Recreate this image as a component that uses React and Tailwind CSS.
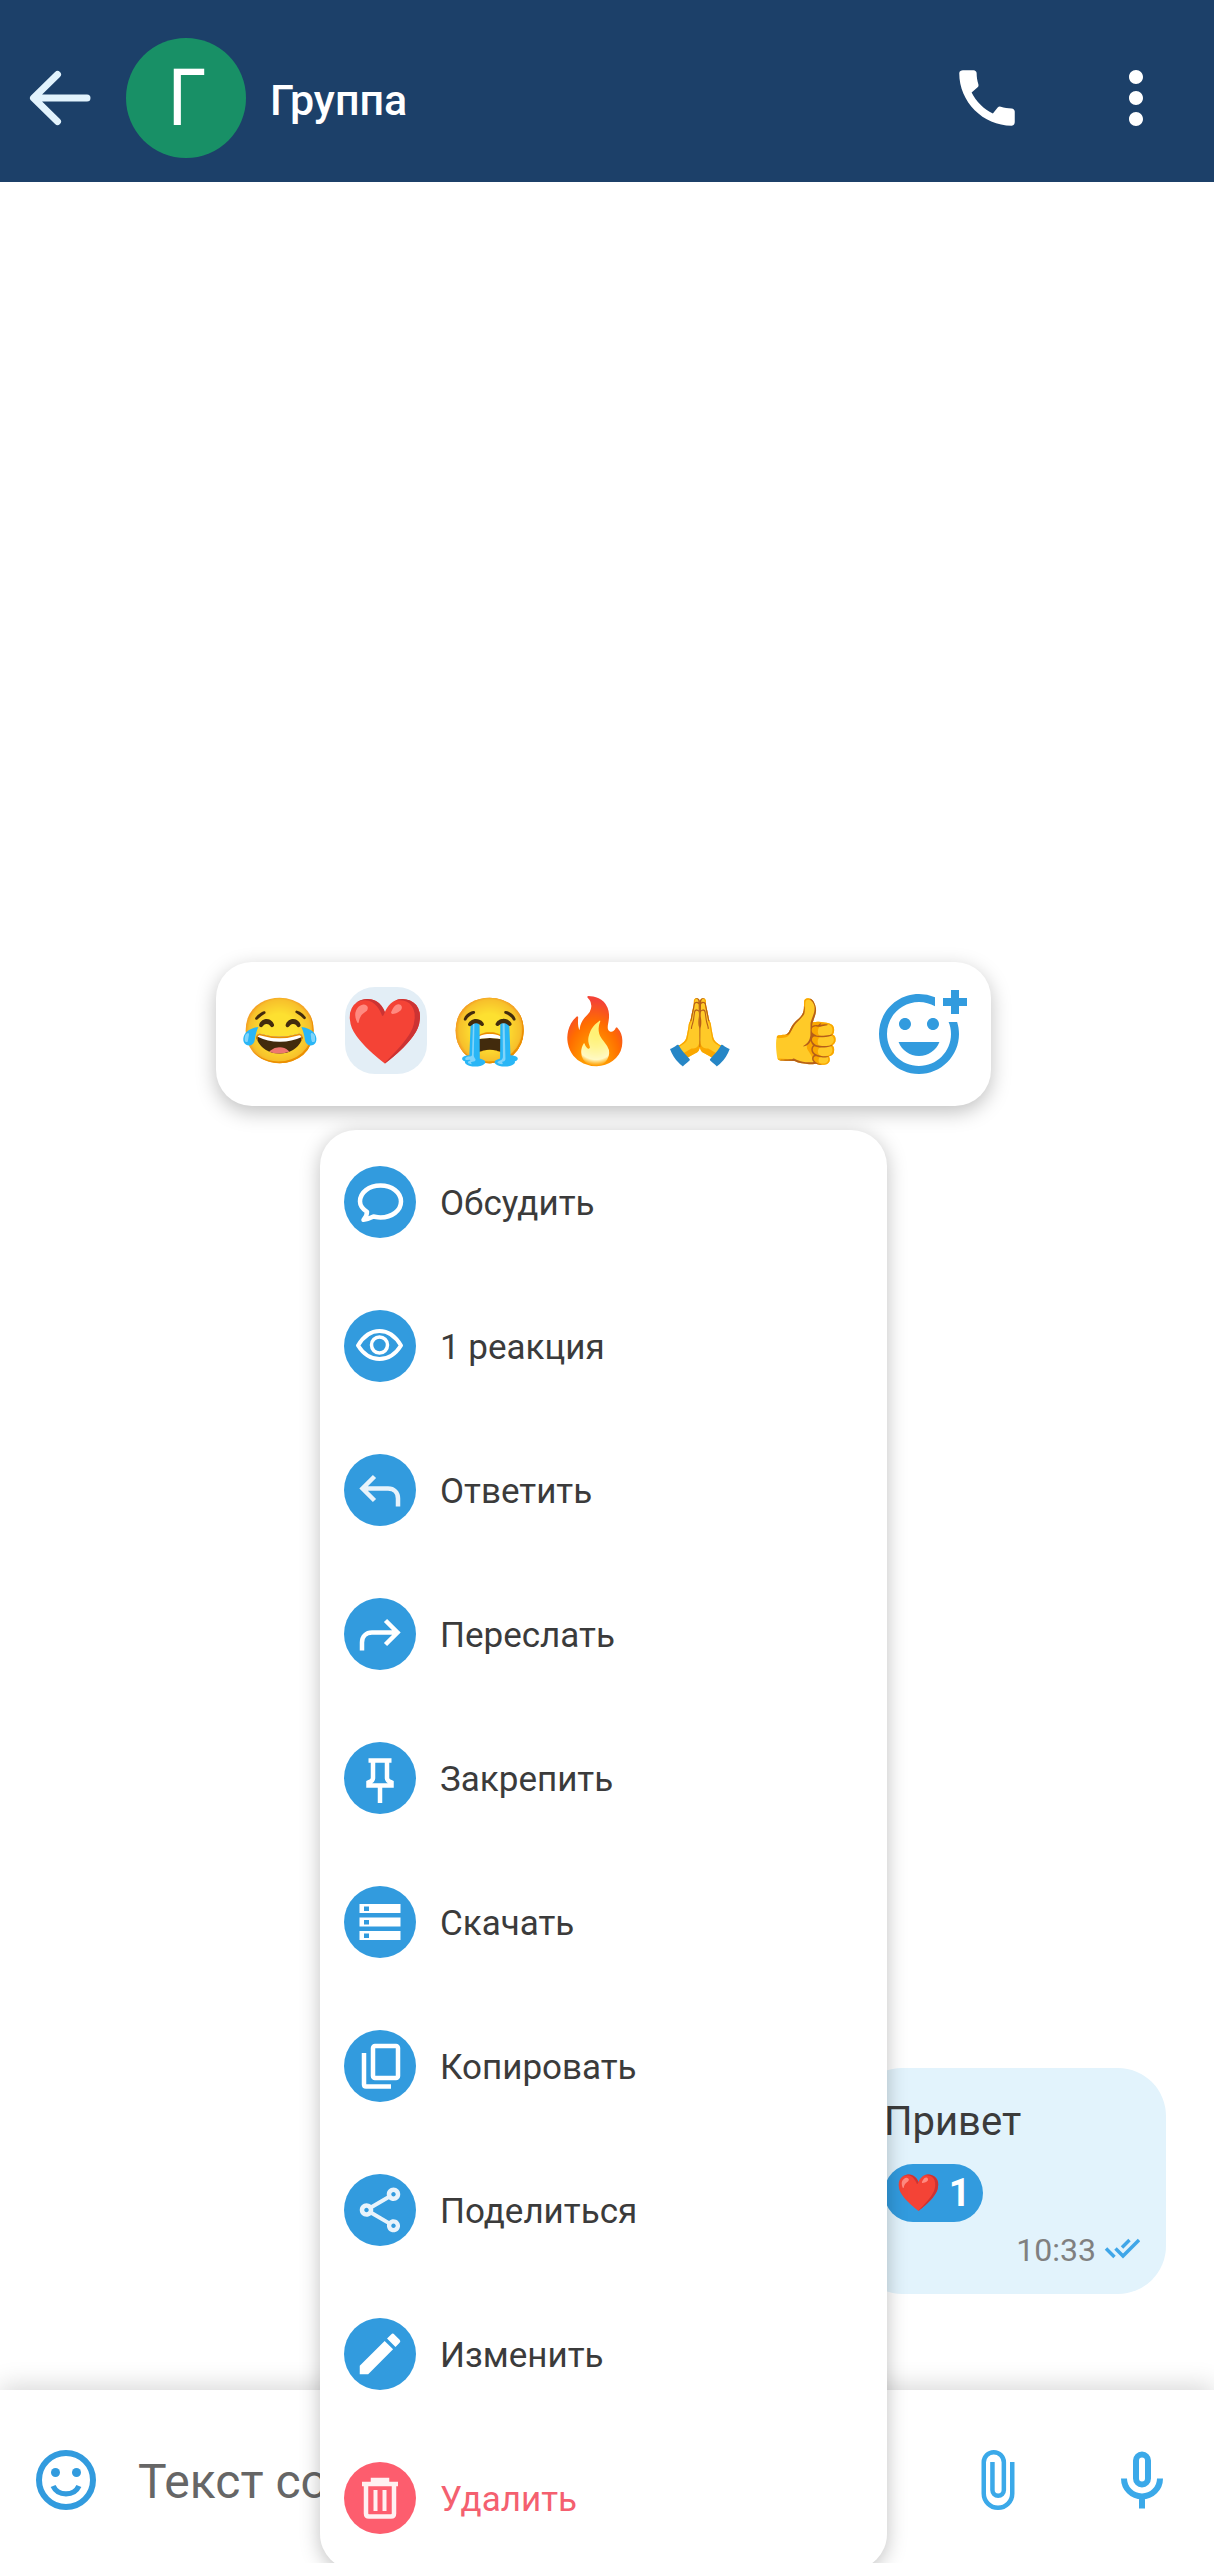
import {
  MdCall,
  MdMoreVert,
  MdOutlineAddReaction,
  MdEdit,
  MdOutlineShare,
} from "react-icons/md";

const reactions = [
  { emoji: "😂", name: "Смех" },
  { emoji: "❤️", name: "Сердце", selected: true },
  { emoji: "😭", name: "Плач" },
  { emoji: "🔥", name: "Огонь" },
  { emoji: "🙏", name: "Спасибо" },
  { emoji: "👍", name: "Нравится" },
];

function Glyph({ children }) {
  return (
    <svg viewBox="0 0 72 72" className="size-18 text-white" fill="none" stroke="currentColor" strokeWidth="4.5" aria-hidden="true">
      {children}
    </svg>
  );
}

const icons = {
  discuss: (
    <Glyph>
      <path
        d="M36.5 19.500c11.500 0 20.500 7 20.500 16s-9 16-20.500 16c-3 0-5-.6-7-1-3 1.500-6 2.700-10 3.300 2.500-2.500 3.500-5.500 3.500-8-4.300-2.800-7-6-7-10.300 0-9 9-16 20.500-16z"
        strokeLinejoin="round"
      />
    </Glyph>
  ),
  eye: (
    <Glyph>
      <path d="M14 35.500C20 25.500 27 21 35.500 21S51 25.500 57 35.500C51 45 44 49 35.500 49S20 45 14 35.500z" strokeWidth="4" strokeLinejoin="round" />
      <circle cx="35.500" cy="35" r="8" strokeWidth="3.500" />
    </Glyph>
  ),
  reply: (
    <Glyph>
      <path d="M30.500 22.500L18.500 34.500l12 12M19 34.500h25c6 0 10 4 10 10v8" stroke="#e8f3fb" />
    </Glyph>
  ),
  forward: (
    <Glyph>
      <path d="M41.500 22.500l12 12-12 12M53 34.500H28c-6 0-10 4-10 10v8" />
    </Glyph>
  ),
  pin: (
    <Glyph>
      <path d="M24.500 18.500h23M29 18.500v17.500q0 3-4.500 4.500v3h23v-3q-4.500-1.500-4.500-4.500V18.500M36 45v16" />
    </Glyph>
  ),
  storage: (
    <Glyph>
      <path
        d="M15.500 18h41v9h-41zM15.500 31.500h41v9h-41zM15.500 45h41v9h-41zM20 20.500v4.500h5v-4.500zM20 34v4.500h5v-4.500zM20 47.500v4.500h5v-4.500z"
        fill="currentColor"
        fillRule="evenodd"
        stroke="none"
      />
    </Glyph>
  ),
  copy: (
    <Glyph>
      <rect x="29" y="16" width="25" height="32" rx="2" />
      <path d="M20 23v31.500q0 2 2 2h25" />
    </Glyph>
  ),
  share: <MdOutlineShare className="size-[54px] text-[#e8f3fb]" aria-hidden="true" />,
  edit: <MdEdit className="size-[54px] text-white" aria-hidden="true" />,
  trash: (
    <Glyph>
      <path d="M18 22h36M22 22v29.500q0 3 3 3h22q3 0 3-3V22M29 20v-2h14v2" stroke="#fff0f1" />
      <path d="M31.500 28v21M40.500 28v21" strokeWidth="4" stroke="#fff0f1" />
    </Glyph>
  ),
};

const menu = [
  { icon: "discuss", label: "Обсудить" },
  { icon: "eye", label: "1 реакция" },
  { icon: "reply", label: "Ответить" },
  { icon: "forward", label: "Переслать" },
  { icon: "pin", label: "Закрепить" },
  { icon: "storage", label: "Скачать" },
  { icon: "copy", label: "Копировать" },
  { icon: "share", label: "Поделиться" },
  { icon: "edit", label: "Изменить" },
  { icon: "trash", label: "Удалить", danger: true },
];

function Header() {
  return (
    <header className="flex items-center bg-[#1c4069] px-6 pt-[38px] pb-6 text-white">
      <button type="button" aria-label="Назад" className="size-18">
        <svg viewBox="0 0 72 72" className="size-18" fill="none" stroke="#e2f3fd" strokeWidth="7" strokeLinecap="round" strokeLinejoin="round" aria-hidden="true">
          <path d="M33.500 12.500L9.500 36l24 23.500M10 36h53" />
        </svg>
      </button>
      <div className="ml-[30px] flex size-[120px] items-center justify-center rounded-full bg-[#189066] pb-1.5 font-['Noto_Sans',sans-serif] text-[78px] leading-none">Г</div>
      <h1 className="ml-6 flex-1 pt-1 text-[43px] leading-[52px] font-medium">Группа</h1>
      <button type="button" aria-label="Позвонить">
        <MdCall className="size-[74px]" />
      </button>
      <button type="button" aria-label="Ещё" className="mr-3 ml-[70px]">
        <MdMoreVert className="size-[84px]" />
      </button>
    </header>
  );
}

function Message() {
  return (
    <article className="mr-12 mb-24 w-[312px] rounded-[48px] bg-[#e2f3fc] px-[30px] pt-7 pb-6">
      <p className="text-[40px] leading-[52px] text-[#3b3b3b]">Привет</p>
      <button type="button" className="mt-4 flex h-[58px] items-center gap-2 rounded-full bg-[#329bde] px-3 text-[38px] font-bold text-white">
        <span className="text-[36px]">❤️</span>1
      </button>
      <div className="mt-2 -mr-1 flex items-center justify-end gap-2">
        <time className="text-[32px] leading-[40px] text-[#808080]">10:33</time>
        <svg viewBox="0 0 36 24" className="h-6 w-9" fill="none" stroke="#3fa6e8" strokeWidth="3.500" aria-label="Прочитано">
          <path d="M2 10.500l8.500 8.500M11.500 10.500l7.500 7.500L35 2M18 9.500l7.500-7.500" />
        </svg>
      </div>
    </article>
  );
}

function Composer() {
  return (
    <footer className="flex h-[173px] items-center bg-white px-[30px] pt-1.5 shadow-[0_-4px_24px_rgba(0,0,0,0.16)]">
      <button type="button" aria-label="Эмодзи" className="size-18">
        <svg viewBox="0 0 24 24" className="size-18 text-[#329bde]" fill="none" stroke="currentColor" strokeWidth="2" aria-hidden="true">
          <circle cx="12" cy="12" r="9" />
          <circle cx="8.500" cy="9.500" r="1.500" fill="currentColor" stroke="none" />
          <circle cx="15.500" cy="9.500" r="1.500" fill="currentColor" stroke="none" />
          <path d="M7.700 14c1.600 3.500 7 3.500 8.600 0" strokeWidth="1.800" />
        </svg>
      </button>
      <input
        type="text"
        aria-label="Текст сообщения"
        placeholder="Текст сообщения"
        className="ml-9 min-w-0 flex-1 bg-transparent pt-1 text-[48px] text-[#3b3b3b] outline-none placeholder:text-[#666]"
      />
      <button type="button" aria-label="Прикрепить файл" className="ml-6 size-18">
        <svg viewBox="0 0 24 24" className="size-18 text-[#3ba9e9]" fill="none" stroke="currentColor" strokeWidth="1.500" aria-hidden="true">
          <path d="M16.750 6v10.500a4.750 4.750 0 0 1-9.500 0V6.100a3.350 3.350 0 0 1 6.700 0V15.350a1.900 1.900 0 0 1-3.800 0V6" />
        </svg>
      </button>
      <button type="button" aria-label="Записать голосовое сообщение" className="mr-1.5 ml-[72px] size-18">
        <svg viewBox="0 0 24 24" className="size-18 text-[#3ba9e9]" fill="none" stroke="currentColor" strokeWidth="2" aria-hidden="true">
          <rect x="10" y="3.500" width="4" height="10" rx="2" />
          <path d="M6 11.500a6 6 0 0 0 12 0M12 17.500v4" />
        </svg>
      </button>
    </footer>
  );
}

export default function App() {
  return (
    <div className="relative flex h-screen flex-col overflow-hidden bg-white font-[Roboto,'Noto_Color_Emoji',sans-serif]">
      <Header />
      <main className="flex flex-1 flex-col items-end justify-end">
        <Message />
      </main>
      <Composer />

      <div className="absolute top-[962px] left-[216px] flex h-36 w-[775px] items-center rounded-[36px] bg-white pr-6 pl-3 shadow-[0_6px_20px_rgba(0,0,0,0.25)]">
        <div className="flex flex-1 pb-2">
          {reactions.map((r) => (
            <button key={r.name} type="button" aria-label={r.name} aria-pressed={!!r.selected} className="flex w-[105px] justify-center">
              <span
                className={
                  r.selected
                    ? "flex h-[87px] w-[82px] items-center justify-center rounded-[30px] bg-[#e3eef6] pt-1 text-[64px] leading-none"
                    : "flex h-[87px] w-[82px] items-center justify-center pt-1 text-[64px] leading-none"
                }
              >
                {r.emoji}
              </span>
            </button>
          ))}
        </div>
        <button type="button" aria-label="Добавить реакцию">
          <MdOutlineAddReaction className="size-24 text-[#329bde]" />
        </button>
      </div>

      <ul className="absolute top-[1130px] left-[320px] w-[567px] rounded-[36px] bg-white shadow-[0_4px_20px_rgba(0,0,0,0.25)]">
        {menu.map((m) => (
          <li key={m.icon}>
            <button type="button" className="flex h-36 w-full items-center gap-6 px-6 text-left">
              <span className={m.danger ? "flex size-18 items-center justify-center rounded-full bg-[#fd5d6e]" : "flex size-18 items-center justify-center rounded-full bg-[#329bde]"}>
                {icons[m.icon]}
              </span>
              <span className={m.danger ? "pt-1 text-[35px] text-[#f4606f]" : "pt-1 text-[35px] text-[#3b3b3b]"}>{m.label}</span>
            </button>
          </li>
        ))}
      </ul>
    </div>
  );
}
